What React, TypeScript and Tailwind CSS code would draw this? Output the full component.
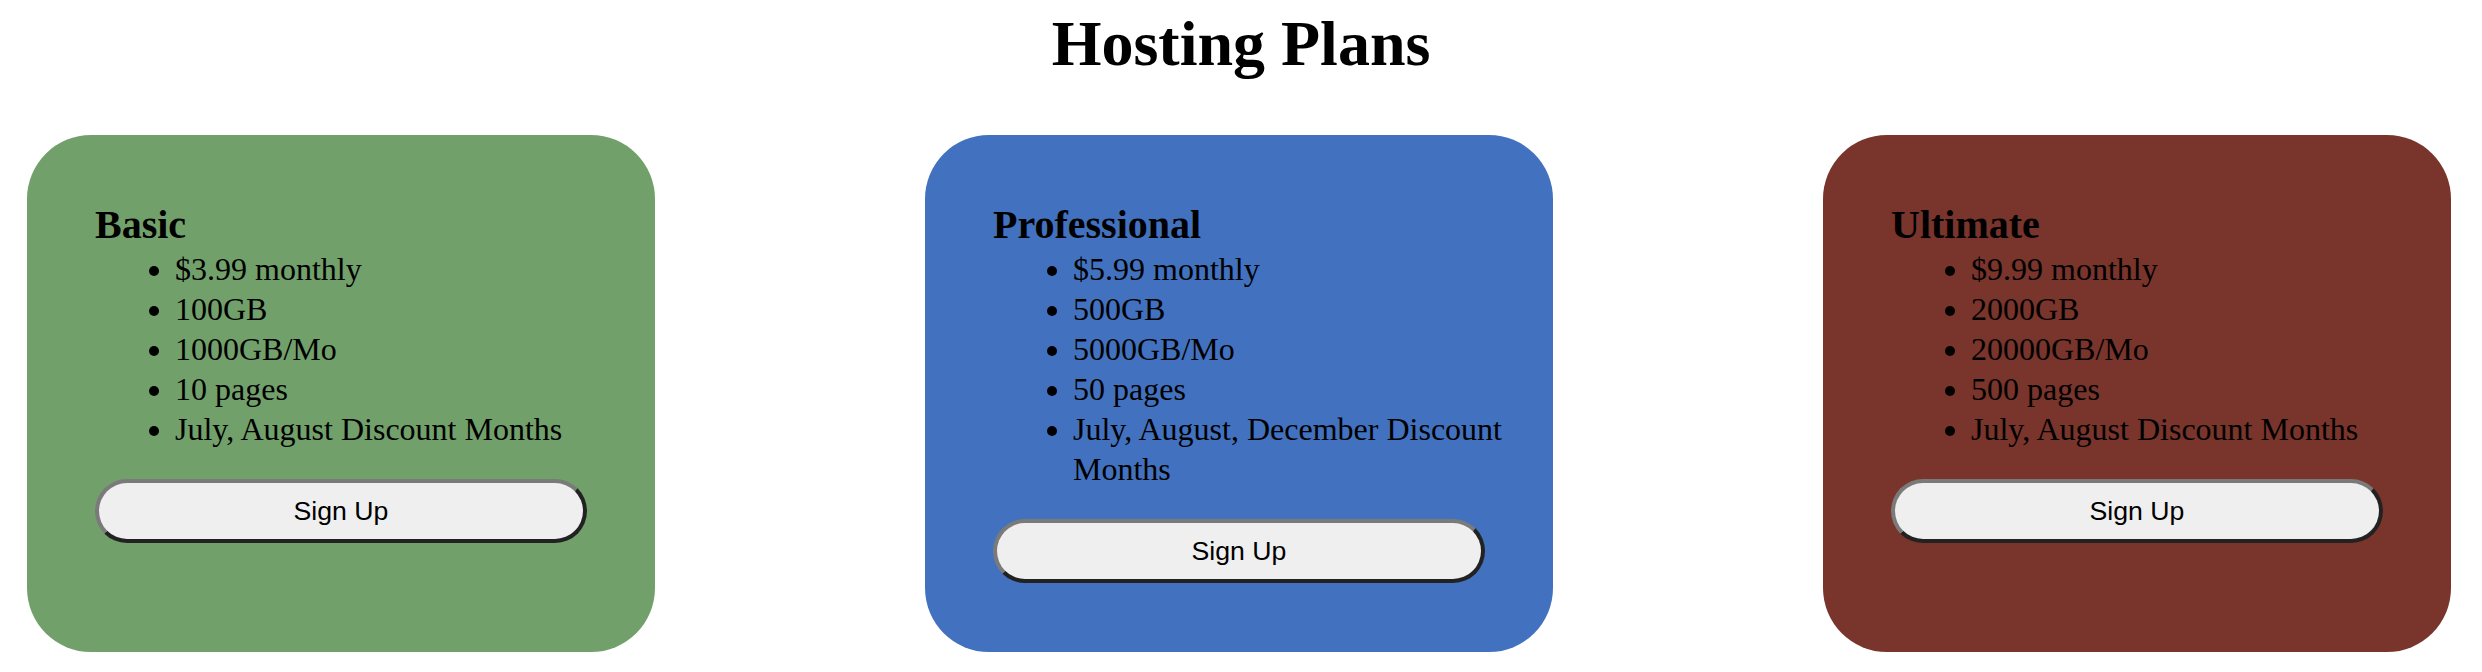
import React from "react";

type Plan = {
  name: string;
  bg: string;
  items: string[];
};

const plans: Plan[] = [
  {
    name: "Basic",
    bg: "bg-[#72a06b]",
    items: ["$3.99 monthly", "100GB", "1000GB/Mo", "10 pages", "July, August Discount Months"],
  },
  {
    name: "Professional",
    bg: "bg-[#4272bf]",
    items: ["$5.99 monthly", "500GB", "5000GB/Mo", "50 pages", "July, August, December Discount Months"],
  },
  {
    name: "Ultimate",
    bg: "bg-[#79342b]",
    items: ["$9.99 monthly", "2000GB", "20000GB/Mo", "500 pages", "July, August Discount Months"],
  },
];

function Card({ plan }: { plan: Plan }) {
  return (
    <div className={`${plan.bg} w-[628px] rounded-[64px] px-[68px] pt-[66px] pb-[69px] text-black`}>
      <h3 className="text-[40px] font-bold leading-[48px]">{plan.name}</h3>
      <ul className="-mr-[30px] list-disc pl-[80px] text-[32px] leading-[40px]">
        {plan.items.map((it) => (
          <li key={it}>{it}</li>
        ))}
      </ul>
      <button
        className="mt-[30px] flex h-[64px] w-full items-center justify-center rounded-full border-[4px] border-t-[#7a7a7a] border-l-[#7a7a7a] border-b-[#222222] border-r-[#222222] bg-[#efefef] text-[26.67px] text-black"
        style={{ fontFamily: '"Liberation Sans", Arial, sans-serif' }}
      >
        Sign Up
      </button>
    </div>
  );
}

export default function App() {
  return (
    <div
      className="min-h-[672px] w-full bg-white text-black"
      style={{ fontFamily: '"Liberation Serif", "Times New Roman", serif' }}
    >
      <h1 className="pt-[7px] text-center text-[64px] font-bold leading-[74px]">Hosting Plans</h1>
      <div className="mt-[54px] flex justify-between pl-[27px] pr-[31px]">
        {plans.map((p) => (
          <Card key={p.name} plan={p} />
        ))}
      </div>
    </div>
  );
}
